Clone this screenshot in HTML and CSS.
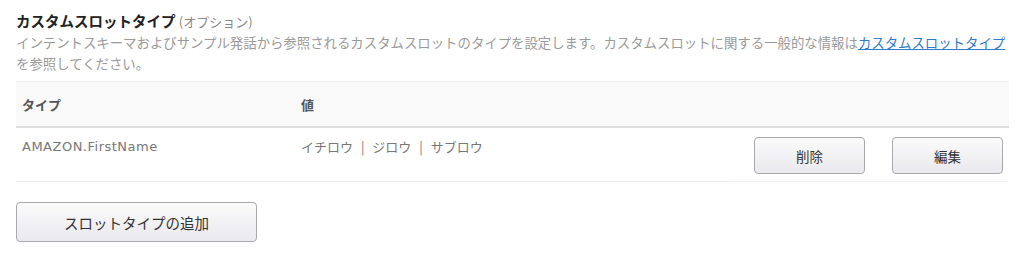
FILE: index.html
```html
<!DOCTYPE html>
<html lang="ja">
<head>
<meta charset="utf-8">
<link rel="stylesheet" href="styles.css">
</head>
<body>
<section class="panel">
  <h2 class="title">カスタムスロットタイプ <span class="opt">(オプション)</span></h2>
  <p class="desc">インテントスキーマおよびサンプル発話から参照されるカスタムスロットのタイプを設定します。カスタムスロットに関する一般的な情報は<a href="#" class="link">カスタムスロットタイプ</a>を参照してください。</p>
  <table class="tbl">
    <thead>
      <tr>
        <th class="c1">タイプ</th>
        <th class="c2">値</th>
        <th class="c3"></th>
      </tr>
    </thead>
    <tbody>
      <tr>
        <td class="c1">AMAZON.FirstName</td>
        <td class="c2">イチロウ | ジロウ | サブロウ</td>
        <td class="c3">
          <div class="actions">
            <button class="btn">削除</button>
            <button class="btn">編集</button>
          </div>
        </td>
      </tr>
    </tbody>
  </table>
  <button class="btn add">スロットタイプの追加</button>
</section>
</body>
</html>
```

FILE: styles.css
```css
html, body {
  margin: 0;
  padding: 0;
  background: #fff;
}
body {
  font-family: "Noto Sans", "Noto Sans CJK JP", sans-serif;
  color: #333;
}
.panel {
  padding: 11px 16px 0 16px;
  width: 992px;
}
.title {
  margin: 0;
  font-size: 14.5px;
  line-height: 20px;
  font-weight: 700;
  color: #222;
  font-family: "Noto Sans CJK JP", sans-serif;
}
.opt {
  font-size: 13px;
  font-weight: 400;
  color: #888;
}
.desc {
  margin: 0;
  font-size: 13.4px;
  line-height: 21px;
  color: #9a9a9a;
  font-family: "Noto Sans CJK JP", sans-serif;
}
.link {
  color: #2e7bcf;
  text-decoration: underline;
}
.tbl {
  margin-top: 7px;
  width: 993px;
  border-collapse: collapse;
  font-size: 13px;
}
.tbl th {
  background: #f9f9f9;
  border-top: 1px solid #eee;
  border-bottom: 2px solid #ddd;
  height: 44px;
  padding: 0 6px;
  text-align: left;
  font-weight: 700;
  color: #555;
  font-family: "Noto Sans CJK JP", sans-serif;
}
.tbl td {
  vertical-align: top;
  padding: 9px 6px 7px 6px;
  border-bottom: 1px solid #eee;
  color: #777;
  line-height: 20px;
}
.tbl td.c1 {
  font-family: "DejaVu Sans", sans-serif;
  font-size: 13px;
  letter-spacing: 0.5px;
}
.tbl td.c2 {
  font-family: "Noto Sans CJK JP", sans-serif;
  word-spacing: 5px;
}
.c1 { width: 267px; }
.c2 { width: 423px; }
.tbl td.c3 {
  padding: 9px 6px 7px 6px;
  border-bottom-color: #f3f3f3;
}
.actions {
  display: flex;
  justify-content: flex-end;
  gap: 27px;
}
.btn {
  font-family: "Noto Sans CJK JP", sans-serif;
  font-size: 13.5px;
  color: #333;
  height: 37px;
  width: 111px;
  border: 1px solid #a9a9ad;
  border-radius: 4px;
  background: linear-gradient(#fbfbfb, #e9e9ee);
  padding: 0;
}
.add {
  margin-top: 20px;
  width: 241px;
  height: 40px;
  font-size: 14.5px;
  color: #333;
}
```
